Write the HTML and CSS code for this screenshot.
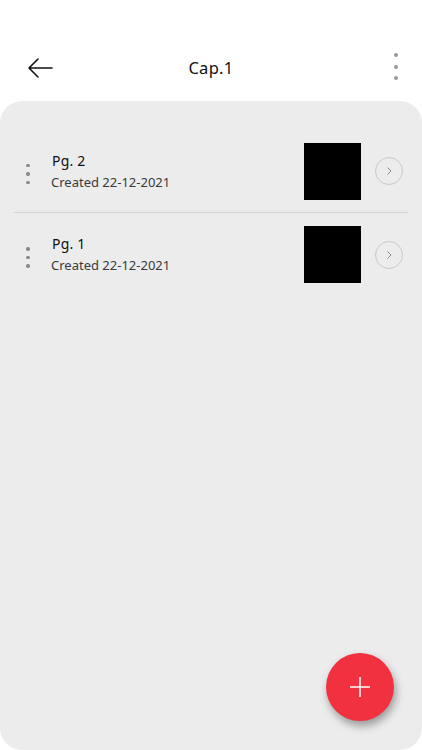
FILE: index.html
```html
<!DOCTYPE html>
<html>
<head>
<meta charset="utf-8">
<link rel="stylesheet" href="styles.css">
</head>
<body>
<div class="screen">
  <header class="topbar">
    <button class="icon-btn back" aria-label="Back">
      <svg width="26" height="20" viewBox="0 0 26 20"><path d="M25 10H2M11 1L2 10l9 9" fill="none" stroke="#111" stroke-width="1.6" stroke-linecap="round" stroke-linejoin="round"/></svg>
    </button>
    <h1 class="title">Cap.1</h1>
    <button class="icon-btn more" aria-label="More">
      <span class="dot"></span><span class="dot"></span><span class="dot"></span>
    </button>
  </header>
  <main class="panel">
    <ul class="list">
      <li class="row">
        <div class="drag"><span class="sdot"></span><span class="sdot"></span><span class="sdot"></span></div>
        <div class="info">
          <div class="name">Pg. 2</div>
          <div class="date">Created 22-12-2021</div>
        </div>
        <div class="thumb"></div>
        <div class="chev"><svg width="12" height="12" viewBox="0 0 12 12"><path d="M4.5 2.5L8 6l-3.5 3.5" fill="none" stroke="#888" stroke-width="1"/></svg></div>
      </li>
      <li class="row">
        <div class="drag"><span class="sdot"></span><span class="sdot"></span><span class="sdot"></span></div>
        <div class="info">
          <div class="name">Pg. 1</div>
          <div class="date">Created 22-12-2021</div>
        </div>
        <div class="thumb"></div>
        <div class="chev"><svg width="12" height="12" viewBox="0 0 12 12"><path d="M4.5 2.5L8 6l-3.5 3.5" fill="none" stroke="#888" stroke-width="1"/></svg></div>
      </li>
    </ul>
    <button class="fab" aria-label="Add">
      <svg width="24" height="24" viewBox="0 0 24 24"><path d="M12 2v20M2 12h20" stroke="#fff" stroke-width="1.5"/></svg>
    </button>
  </main>
</div>
</body>
</html>
```
FILE: styles.css
```css
* { box-sizing: border-box; }
html, body { margin: 0; padding: 0; background: #fff; }
body { font-family: "Noto Sans", "Open Sans", sans-serif; width: 422px; height: 750px; overflow: hidden; }
.screen { display: flex; flex-direction: column; height: 750px; }
.topbar { height: 101px; display: grid; grid-template-columns: 1fr auto 1fr; align-items: center; padding: 34px 16px 0 16px; }
.icon-btn { background: none; border: 0; padding: 0; display: flex; cursor: pointer; }
.back { width: 28px; height: 24px; align-items: center; justify-self: start; margin-left: 11px; }
.title { margin: 0; font-size: 16.5px; font-weight: 400; color: #111; letter-spacing: 0.3px; text-align: center; }
.more { flex-direction: column; align-items: center; gap: 7.5px; width: 20px; padding-bottom: 2px; justify-self: end; }
.dot { width: 4px; height: 4px; border-radius: 50%; background: #999; }
.panel { flex: 1; background: #ececec; border-radius: 22px; position: relative; }
.list { list-style: none; margin: 0; padding: 29px 14px 0 14px; }
.row { display: flex; align-items: center; height: 83px; border-bottom: 1px solid #d5d5d5; }
.row:last-child { border-bottom: 0; }
.drag { width: 37px; display: flex; flex-direction: column; align-items: center; gap: 5px; padding-right: 9px; padding-top: 6px; }
.sdot { width: 3.5px; height: 3.5px; border-radius: 50%; background: #8a8a8a; }
.info { flex: 1; display: flex; flex-direction: column; gap: 3px; padding-bottom: 1px; }
.name { font-size: 14px; color: #111; padding-left: 1px; letter-spacing: 0.2px; }
.date { font-size: 13px; color: #3a3a3a; }
.thumb { width: 57px; height: 57px; background: #000; }
.chev { width: 28px; height: 28px; border: 1px solid #c8c8c8; border-radius: 50%; display: flex; align-items: center; justify-content: center; margin-left: 14px; margin-right: 5px; }
.fab { position: absolute; left: 326px; top: 552px; width: 68px; height: 68px; border-radius: 50%; background: #f1313f; border: 0; display: flex; align-items: center; justify-content: center; box-shadow: 2px 5px 8px rgba(0,0,0,0.35); }
```
